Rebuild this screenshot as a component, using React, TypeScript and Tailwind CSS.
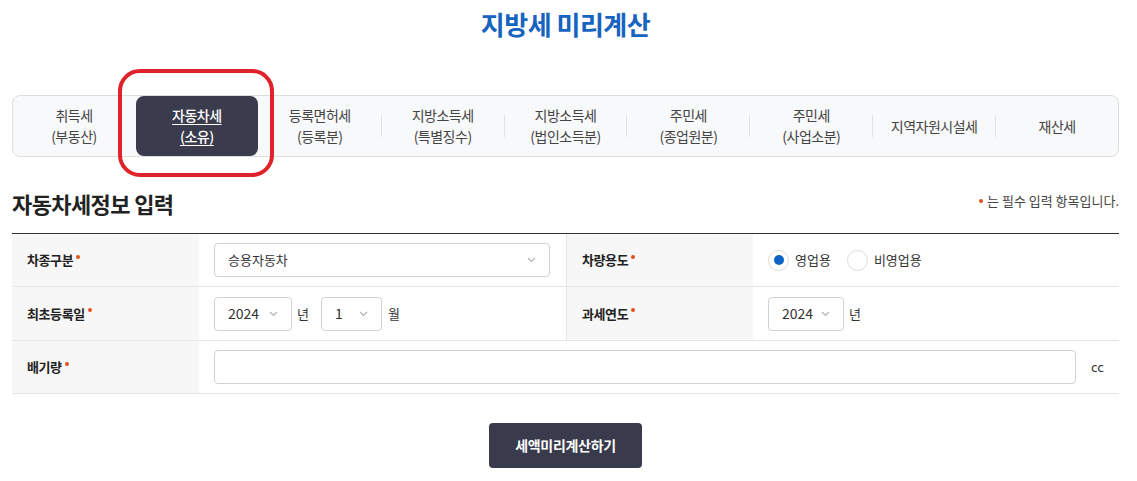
import { useState } from 'react';

const FONT = "font-['Noto_Sans_CJK_KR','Noto_Sans',sans-serif]";

const TABS = [
  ['취득세', '(부동산)'],
  ['자동차세', '(소유)'],
  ['등록면허세', '(등록분)'],
  ['지방소득세', '(특별징수)'],
  ['지방소득세', '(법인소득분)'],
  ['주민세', '(종업원분)'],
  ['주민세', '(사업소분)'],
  ['지역자원시설세'],
  ['재산세'],
];

function Chevron() {
  return (
    <svg width="9" height="6" viewBox="0 0 9 6" fill="none" className="shrink-0">
      <path d="M1 1l3.5 3.5L8 1" stroke="#b4b4b4" strokeWidth="1.2" />
    </svg>
  );
}

function Required() {
  return <span className="ml-[3px] mb-[7px] inline-block h-[4px] w-[4px] rounded-full bg-[#e6501a]" />;
}

function Label({ text, bordered }: { text: string; bordered?: boolean }) {
  return (
    <div
      className={`flex items-center bg-[#f7f7f7] pl-[15px] text-[13px] font-bold tracking-[-0.4px] text-[#222] ${
        bordered ? 'border-l border-[#ececec]' : ''
      }`}
    >
      <span>{text}</span>
      <Required />
    </div>
  );
}

function Select({ value, width, grow }: { value: string; width?: string; grow?: boolean }) {
  return (
    <div
      className={`flex h-[34px] items-center justify-between rounded-[4px] border border-[#d2d2d2] bg-white pl-[13px] pr-[13px] text-[14px] text-[#333] ${
        grow ? 'flex-1' : width
      }`}
    >
      <span className={grow ? 'text-[13px]' : ''}>{value}</span>
      <Chevron />
    </div>
  );
}

function Radio({ label, checked }: { label: string; checked?: boolean }) {
  return (
    <div className="flex items-center gap-[6px]">
      <span className="flex h-[21px] w-[21px] items-center justify-center rounded-full border border-[#dcdcdc] bg-white">
        {checked && <span className="h-[10px] w-[10px] rounded-full bg-[#0b63c9]" />}
      </span>
      <span className="text-[13px] text-[#333]">{label}</span>
    </div>
  );
}

export default function App() {
  const [active, setActive] = useState(1);

  return (
    <div className={`relative min-h-[481px] bg-white ${FONT}`}>
      <div className="w-[1107px] ml-[12px]">
        <h1 className="pt-[6px] text-center text-[26px] font-bold leading-[36px] tracking-[-0.5px] text-[#1664c0]">
          지방세 미리계산
        </h1>

        {/* 세목 탭 */}
        <div className="mt-[53px] flex h-[62px] items-center rounded-[8px] border border-[#dedede] bg-[#f8f9fa]">
          {TABS.map((lines, i) => {
            const isActive = i === active;
            const showSep = i > 0 && i !== active && i - 1 !== active;
            return (
              <div key={i} className="contents">
                {i > 0 && (
                  <span className={`h-[22px] w-px shrink-0 ${showSep ? 'bg-[#e2e2e2]' : 'bg-transparent'}`} />
                )}
                <button
                  type="button"
                  onClick={() => setActive(i)}
                  className={`flex h-[60px] flex-1 flex-col items-center justify-center rounded-[8px] text-[14px] leading-[21px] tracking-[-0.5px] ${
                    isActive
                      ? 'bg-[#3a3b4c] font-medium text-white underline underline-offset-[3px]'
                      : 'text-[#444]'
                  }`}
                >
                  {lines.map((l) => (
                    <span key={l}>{l}</span>
                  ))}
                </button>
              </div>
            );
          })}
        </div>

        <div className="mt-[32px] flex items-center justify-between">
          <h2 className="text-[22px] font-bold leading-[28px] tracking-[-0.6px] text-[#222]">자동차세정보 입력</h2>
          <p className="mb-[4px] flex items-center text-[13px] text-[#444]">
            <span className="mr-[4px] inline-block h-[4px] w-[4px] rounded-full bg-[#e6501a]" />
            는 필수 입력 항목입니다.
          </p>
        </div>

        {/* 입력 테이블 */}
        <div className="mt-[16px] grid grid-cols-[187px_367px_187px_1fr] grid-rows-[53px_54px_53px] border-t border-[#333]">
          <div className="contents [&>*]:border-b [&>*]:border-[#e6e6e6]">
            <Label text="차종구분" />
            <div className="flex items-center pl-[15px] pr-[16px]">
              <Select value="승용자동차" grow />
            </div>
            <Label text="차량용도" bordered />
            <div className="flex items-center gap-[16px] pl-[15px]">
              <Radio label="영업용" checked />
              <Radio label="비영업용" />
            </div>

            <Label text="최초등록일" />
            <div className="flex items-center pl-[15px] text-[13px] text-[#333]">
              <Select value="2024" width="w-[78px]" />
              <span className="ml-[5px] mr-[12px]">년</span>
              <Select value="1" width="w-[61px]" />
              <span className="ml-[6px]">월</span>
            </div>
            <Label text="과세연도" bordered />
            <div className="flex items-center pl-[15px] text-[13px] text-[#333]">
              <Select value="2024" width="w-[76px]" />
              <span className="ml-[5px]">년</span>
            </div>

            <Label text="배기량" />
            <div className="col-span-3 flex items-center gap-[15px] pl-[15px] pr-[15px]">
              <input
                type="text"
                className="h-[34px] flex-1 rounded-[4px] border border-[#d2d2d2] bg-white px-[12px] text-[13px] outline-none"
              />
              <span className="text-[13px] text-[#333]">cc</span>
            </div>
          </div>
        </div>

        <div className="mt-[29px] flex justify-center">
          <button
            type="button"
            className="h-[45px] w-[153px] rounded-[4px] bg-[#393a4b] text-[14px] font-bold tracking-[-0.3px] text-white"
          >
            세액미리계산하기
          </button>
        </div>
      </div>

      {/* 강조 표시 */}
      <div className="pointer-events-none absolute left-[118px] top-[69px] h-[108px] w-[156px] rounded-[22px] border-[4px] border-[#e0232b]" />
    </div>
  );
}
